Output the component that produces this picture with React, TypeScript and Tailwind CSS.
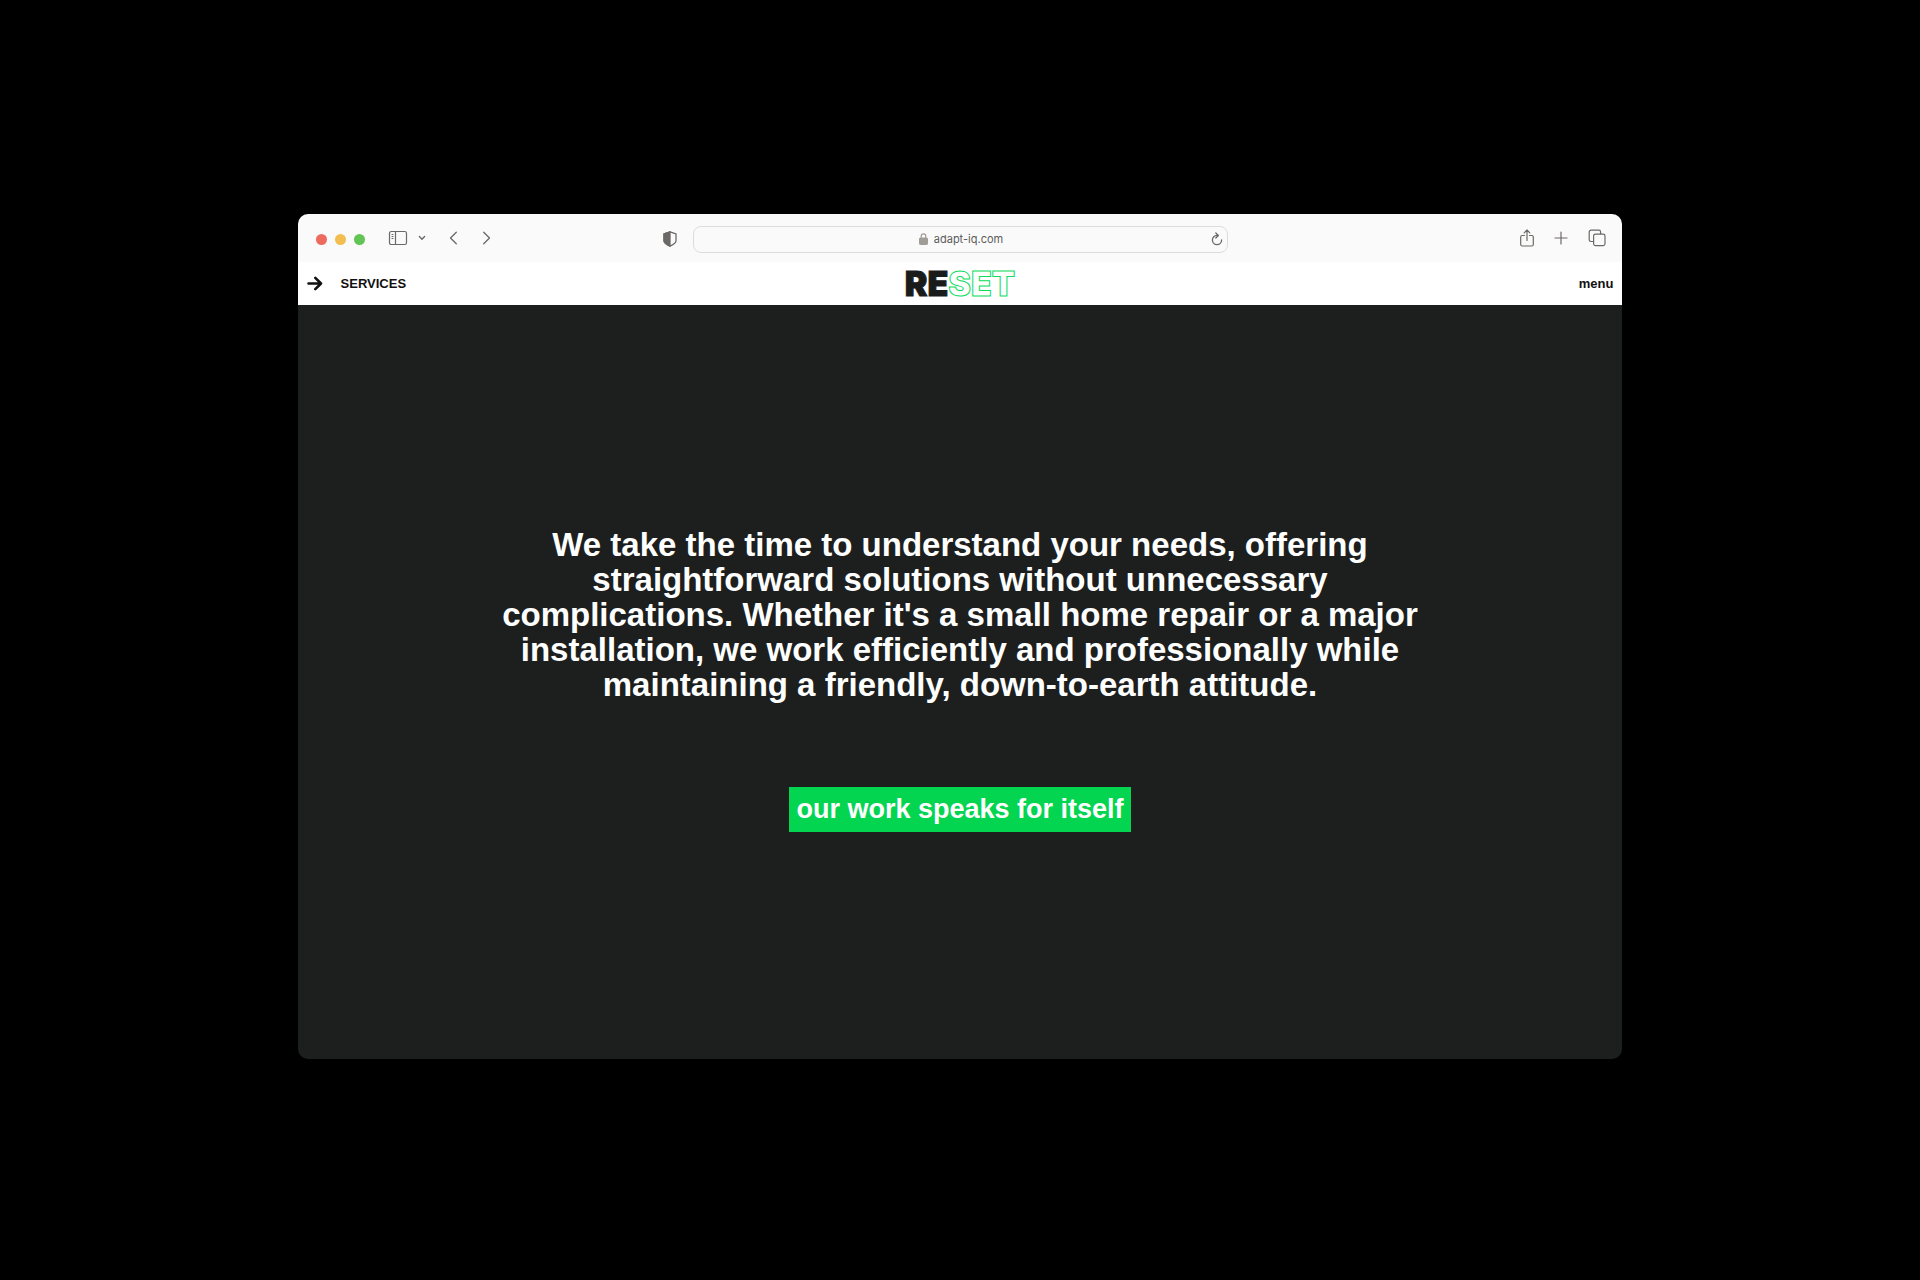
import type { ReactNode } from "react";

type IconButtonProps = {
  label: string;
  children: ReactNode;
};

function IconButton({ label, children }: IconButtonProps) {
  return (
    <button type="button" aria-label={label} className="flex items-center text-[#6b6967]">
      {children}
    </button>
  );
}

function SidebarIcon() {
  return (
    <svg width="20" height="16" viewBox="0 0 20 16" fill="none" stroke="currentColor" strokeWidth="1.2">
      <rect x="1.5" y="1.5" width="17" height="13" rx="1.8" />
      <path d="M7.5 1.5v13" />
      <path d="M3.6 4.5h1.8M3.6 6.5h1.8M3.6 8.5h1.8" strokeWidth="1" />
    </svg>
  );
}

function ChevronDown() {
  return (
    <svg width="8" height="6" viewBox="0 0 8 6" fill="none" stroke="currentColor" strokeWidth="1.4" strokeLinecap="round" strokeLinejoin="round">
      <path d="M1.4 1.6 4 4.2l2.6-2.6" />
    </svg>
  );
}

function ChevronLeft() {
  return (
    <svg width="9" height="14" viewBox="0 0 9 14" fill="none" stroke="currentColor" strokeWidth="1.3" strokeLinecap="round" strokeLinejoin="round">
      <path d="M7.3 1.2 1.5 7l5.8 5.8" />
    </svg>
  );
}

function ChevronRight() {
  return (
    <svg width="9" height="14" viewBox="0 0 9 14" fill="none" stroke="currentColor" strokeWidth="1.3" strokeLinecap="round" strokeLinejoin="round">
      <path d="M1.7 1.2 7.5 7l-5.8 5.8" />
    </svg>
  );
}

function ShieldIcon() {
  return (
    <svg width="14" height="16" viewBox="0 0 14 16" fill="none" stroke="currentColor" strokeWidth="1.3" strokeLinejoin="round">
      <path d="M7 .8 13 2.8v7c0 2.2-2.4 3.8-6 5.4-3.6-1.6-6-3.2-6-5.4v-7z" />
      <path d="M7 .8v14.4c-3.6-1.6-6-3.2-6-5.4v-7z" fill="currentColor" />
    </svg>
  );
}

function LockIcon() {
  return (
    <svg width="9" height="12" viewBox="0 0 9 12" fill="none" stroke="currentColor" className="text-[#a09d98]">
      <rect x=".5" y="5" width="8" height="6.5" rx=".8" fill="currentColor" />
      <path d="M2.2 5.2V3.2a2.3 2.3 0 0 1 4.6 0v2" strokeWidth="1.2" />
    </svg>
  );
}

function ReloadIcon() {
  return (
    <svg width="12" height="14" viewBox="0 0 12 14" fill="none" stroke="currentColor" strokeWidth="1.3" strokeLinecap="round" strokeLinejoin="round">
      <path d="M7 3.4H6A4.6 4.6 0 1 0 10.6 8" />
      <path d="M4.8 1 7.3 3.5 4.8 6" />
    </svg>
  );
}

function ShareIcon() {
  return (
    <svg width="14" height="18" viewBox="0 0 14 18" fill="none" stroke="currentColor" strokeWidth="1.2" strokeLinecap="round" strokeLinejoin="round">
      <path d="M4.5 6.5H2.2A1.5 1.5 0 0 0 .7 8v7.5A1.5 1.5 0 0 0 2.2 17h9.6a1.5 1.5 0 0 0 1.5-1.5V8a1.5 1.5 0 0 0-1.5-1.5H9.5" />
      <path d="M7 11.5V1.2M4.2 3.8 7 1l2.8 2.8" />
    </svg>
  );
}

function PlusIcon() {
  return (
    <svg width="14" height="14" viewBox="0 0 14 14" fill="none" stroke="currentColor" strokeWidth="1.2" strokeLinecap="round">
      <path d="M7 1v12M1 7h12" />
    </svg>
  );
}

function TabsIcon() {
  return (
    <svg width="18" height="18" viewBox="0 0 18 18" fill="none" stroke="currentColor" strokeWidth="1.2" strokeLinejoin="round">
      <rect x="5.6" y="5.2" width="11.4" height="11.4" rx="1.8" />
      <path d="M5.6 12.5H3A1.8 1.8 0 0 1 1.2 10.7V3A1.8 1.8 0 0 1 3 1.2h7.8A1.8 1.8 0 0 1 12.6 3v2.2" />
    </svg>
  );
}

function ArrowIcon() {
  return (
    <svg width="16" height="16" viewBox="0 0 16 16" fill="none" stroke="currentColor" strokeWidth="2.6" strokeLinecap="round" strokeLinejoin="round">
      <path d="M1.5 7.5h12.5M8.3 1.8l5.7 5.7-5.7 5.7" />
    </svg>
  );
}

function BrowserToolbar() {
  return (
    <div className="grid h-12 shrink-0 grid-cols-[1fr_535px_1fr] items-center bg-[#fafafa] pt-0.5 pr-4 pl-[18px]">
      <div className="flex items-center">
        <div className="flex gap-2">
          <span className="size-[11px] rounded-full bg-[#ec6a5e]" />
          <span className="size-[11px] rounded-full bg-[#f4bd4f]" />
          <span className="size-[11px] rounded-full bg-[#61c454]" />
        </div>
        <div className="ml-[23px] flex items-center gap-2.5 pb-0.5">
          <IconButton label="Sidebar"><SidebarIcon /></IconButton>
          <IconButton label="Tab groups"><ChevronDown /></IconButton>
        </div>
        <div className="ml-[23px] flex items-center gap-6 pb-0.5">
          <IconButton label="Back"><ChevronLeft /></IconButton>
          <IconButton label="Forward"><ChevronRight /></IconButton>
        </div>
        <div className="mr-4 ml-auto flex">
          <IconButton label="Privacy report"><ShieldIcon /></IconButton>
        </div>
      </div>
      <div className="flex h-[27px] items-center rounded-lg border border-[#dcdcdc] px-1">
        <label className="ml-3 flex flex-1 items-center justify-center gap-1.5">
          <LockIcon />
          <input
            type="text"
            aria-label="Address"
            defaultValue="adapt-iq.com"
            className="field-sizing-content font-['Inter',sans-serif] text-[11px] leading-4 text-[#5c5c5c] outline-none"
          />
        </label>
        <IconButton label="Reload"><ReloadIcon /></IconButton>
      </div>
      <div className="flex items-center justify-end gap-5 pb-0.5">
        <IconButton label="Share"><ShareIcon /></IconButton>
        <IconButton label="New tab"><PlusIcon /></IconButton>
        <IconButton label="Tabs"><TabsIcon /></IconButton>
      </div>
    </div>
  );
}

function Logo() {
  return (
    <a href="#" className="font-['Inter',sans-serif] text-[34px] leading-9 font-black text-[#1a1c1b]">
      <span className="[-webkit-text-stroke:1px_#1a1c1b]">RE</span>
      <span className="text-white [-webkit-text-stroke:1px_#0bdc60]">SET</span>
    </a>
  );
}

function SiteHeader() {
  return (
    <header className="grid h-[43px] shrink-0 grid-cols-[1fr_auto_1fr] items-center bg-white px-[9px] text-[13px] leading-4 font-bold text-[#111]">
      <a href="#services" className="flex items-center gap-[18px]">
        <ArrowIcon />
        SERVICES
      </a>
      <Logo />
      <button type="button" className="justify-self-end">
        menu
      </button>
    </header>
  );
}

export default function App() {
  return (
    <div className="flex min-h-screen items-center justify-center bg-black pb-[7px] font-['Liberation_Sans',sans-serif]">
      <div className="flex min-h-[66vh] w-[69%] flex-col overflow-hidden rounded-[10px] bg-[#1d1f1e]">
        <BrowserToolbar />
        <SiteHeader />
        <main className="flex flex-1 flex-col items-center justify-center gap-[85px] pb-1 text-center font-bold text-white">
          <p className="max-w-[930px] text-[33px] leading-[35px]">
            We take the time to understand your needs, offering straightforward
            solutions without unnecessary complications. Whether it's a small
            home repair or a major installation, we work efficiently and
            professionally while maintaining a friendly, down-to-earth attitude.
          </p>
          <a href="#work" className="bg-[#03d551] px-[7px] py-1.5 text-[27px] leading-[33px]">
            our work speaks for itself
          </a>
        </main>
      </div>
    </div>
  );
}
